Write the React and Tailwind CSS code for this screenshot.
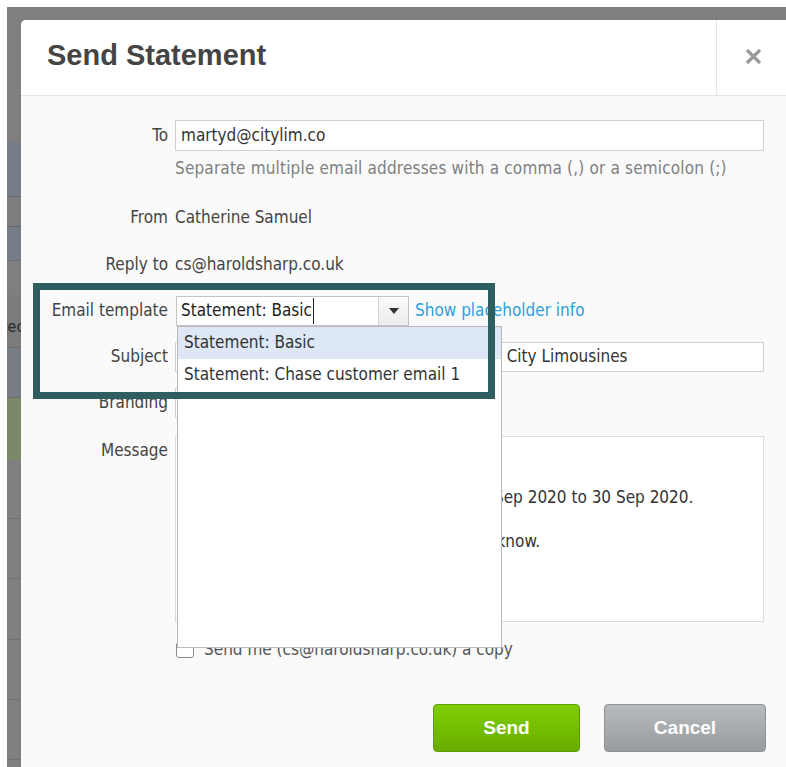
const bodyFont = { fontFamily: '"DejaVu Sans Condensed", "DejaVu Sans", sans-serif' };
const headFont = { fontFamily: '"Liberation Sans", Arial, sans-serif' };

// bands of the page sitting behind the modal (only a sliver shows on the left)
const backdropRows = [
  { h: 135, cls: "bg-[#7f7f7f]" },
  { h: 55, cls: "bg-[#777d86] border-b border-[#5f6671]" },
  { h: 30, cls: "bg-[#7d7d7d] border-b border-[#5f6671]" },
  { h: 34, cls: "bg-[#767c85] border-b border-[#6a6f77]" },
  { h: 34, cls: "bg-[#7f7f7f]" },
  { h: 53, cls: "bg-[#7b7b7b] border-b border-[#6d6d6d]", text: "Protected" },
  { h: 50, cls: "bg-[#787c84] border-b border-[#6d6d6d]" },
  { h: 62, cls: "bg-[#7a8a68]" },
  { h: 59, cls: "bg-[#7f7f7f] border-b border-[#707070]" },
  { h: 60, cls: "bg-[#7f7f7f] border-b border-[#707070]" },
  { h: 61, cls: "bg-[#7f7f7f] border-b border-[#707070]" },
  { h: 60, cls: "bg-[#7f7f7f] border-b border-[#707070]" },
  { h: 60, cls: "bg-[#7f7f7f] border-b border-[#707070]" },
  { h: 20, cls: "bg-[#7f7f7f]" },
];

function Label({ children, className = "" }) {
  return (
    <div className={`text-right text-[#444] pr-[7px] ${className}`}>{children}</div>
  );
}

export default function App() {
  return (
    <div className="relative w-[786px] h-[767px] overflow-hidden bg-white pl-[7px] pt-[7px]" style={bodyFont}>
      <div className="flex h-full bg-[#7f7f7f]">
        {/* sliver of the underlying page */}
        <div className="w-[14px] shrink-0 flex flex-col overflow-hidden">
          {backdropRows.map((r, i) => (
            <div key={i} className={`shrink-0 flex items-center justify-end overflow-hidden ${r.cls}`} style={{ height: r.h }}>
              {r.text && (
                <span className="whitespace-nowrap text-[16px] text-[#2a2a2a] -mr-[27px] mt-[12px]">{r.text}</span>
              )}
            </div>
          ))}
        </div>

        {/* modal */}
        <div className="flex-1 mt-[13px] rounded-tl-[5px] bg-[#fafafa] flex flex-col overflow-hidden">
          <div className="h-[76px] shrink-0 flex bg-white border-b border-[#e4e4e4]">
            <h1 className="flex-1 flex items-center pl-[26px] pb-[4px] text-[29px] font-bold text-[#444]" style={headFont}>
              Send Statement
            </h1>
            <div className="w-[70px] flex items-center justify-center border-l border-[#e4e4e4] pb-[2px] pl-[3px]">
              <svg width="17" height="17" viewBox="0 0 17 17">
                <path d="M2 2 L15 15 M15 2 L2 15" stroke="#9a9a9a" strokeWidth="3.2" strokeLinecap="butt" />
              </svg>
            </div>
          </div>

          <div className="grid grid-cols-[154px_1fr] pr-[22px] pt-[24px] text-[17px] text-[#444]">
            {/* To */}
            <Label className="h-[31px] flex items-center justify-end">To</Label>
            <div className="h-[31px] bg-white border border-[#cfcfcf] flex items-center px-[5px] text-[#333]">
              martyd@citylim.co
            </div>
            <div />
            <div className="h-[20px] mt-[8px] flex items-center text-[#808080] whitespace-nowrap tracking-[0.17px]">
              Separate multiple email addresses with a comma (,) or a semicolon (;)
            </div>

            {/* From */}
            <Label className="h-[30px] mt-[24px] flex items-center justify-end">From</Label>
            <div className="h-[30px] mt-[24px] flex items-center text-[#444]">Catherine Samuel</div>

            {/* Reply to */}
            <Label className="h-[30px] mt-[17px] flex items-center justify-end">Reply to</Label>
            <div className="h-[30px] mt-[17px] flex items-center text-[#444]">cs@haroldsharp.co.uk</div>

            {/* Email template */}
            <Label className="h-[30px] mt-[16px] flex items-center justify-end">Email template</Label>
            <div className="h-[30px] mt-[16px] flex items-center">
              <div className="relative w-[233px] h-[30px] ml-[1px] flex bg-white border border-[#c4c4c4]">
                <div className="flex-1 flex items-center pl-[4px] text-[#222]">
                  Statement: Basi<span className="border-r border-[#222] pr-[1px]">c</span>
                </div>
                <div className="w-[30px] flex items-center justify-center border-l border-[#d0d0d0] bg-gradient-to-b from-[#fbfbfb] to-[#ececec]">
                  <svg width="10" height="6" viewBox="0 0 10 6">
                    <path d="M0 0 H10 L5 6 Z" fill="#333" />
                  </svg>
                </div>

                {/* open list */}
                <div className="absolute z-10 left-0 top-[29px] w-[325px] h-[322px] bg-white border border-[#b9b9b9] text-[#333]">
                  <div className="h-[32px] flex items-center pl-[6px] bg-[#dde7f5]">Statement: Basic</div>
                  <div className="h-[32px] flex items-center pl-[6px]">Statement: Chase customer email 1</div>
                </div>
              </div>
              <a className="ml-[6px] text-[#2e9fd8]">Show placeholder info</a>
            </div>

            {/* Subject */}
            <Label className="h-[30px] mt-[16px] flex items-center justify-end">Subject</Label>
            <div className="h-[30px] mt-[16px] bg-white border border-[#cfcfcf] flex items-center px-[5px] text-[#333] whitespace-nowrap overflow-hidden">
              Your statement from Harold Sharp Ltd. for City Limousines
            </div>

            {/* Branding */}
            <Label className="h-[30px] mt-[16px] flex items-center justify-end">Branding</Label>
            <div className="h-[30px] mt-[16px] w-[200px] bg-white border border-[#cfcfcf]" />

            {/* Message */}
            <Label className="mt-[18px] pt-[4px] leading-[20px]">Message</Label>
            <div className="h-[186px] mt-[18px] bg-white border border-[#dcdcdc] px-[5px] pt-[5px] leading-[22px] text-[#333] whitespace-nowrap overflow-hidden">
              <div>Dear Marty,</div>
              <div className="h-[22px]" />
              <div>Please see the attached statement for 1 Sep 2020 to 30 Sep 2020.</div>
              <div className="h-[22px]" />
              <div>If you have any questions, please let me know.</div>
              <div className="h-[22px]" />
              <div>Kind regards</div>
            </div>

            {/* Copy to self */}
            <div className="mt-[18px]" />
            <label className="h-[20px] mt-[18px] flex items-center gap-[10px] text-[#555]">
              <span className="w-[18px] h-[16px] ml-[1px] bg-white border border-[#8a8a8a] rounded-[3px]" />
              Send me (cs@haroldsharp.co.uk) a copy
            </label>
          </div>

          {/* actions */}
          <div className="flex justify-end gap-[24px] pr-[20px] mt-[44px]" style={headFont}>
            <button className="w-[147px] h-[48px] rounded-[4px] border border-[#5e9e0a] bg-gradient-to-b from-[#7fcf06] to-[#68ad00] text-white text-[19px] font-bold">
              Send
            </button>
            <button className="w-[162px] h-[48px] rounded-[4px] border border-[#8f9295] bg-gradient-to-b from-[#b8bbbe] to-[#999c9f] text-white text-[19px] font-bold">
              Cancel
            </button>
          </div>
        </div>
      </div>

      {/* callout frame around the template picker */}
      <div className="absolute z-20 left-[33px] top-[283px] w-[462px] h-[116px] border-[7px] border-[#2e5e60] pointer-events-none" />
    </div>
  );
}
